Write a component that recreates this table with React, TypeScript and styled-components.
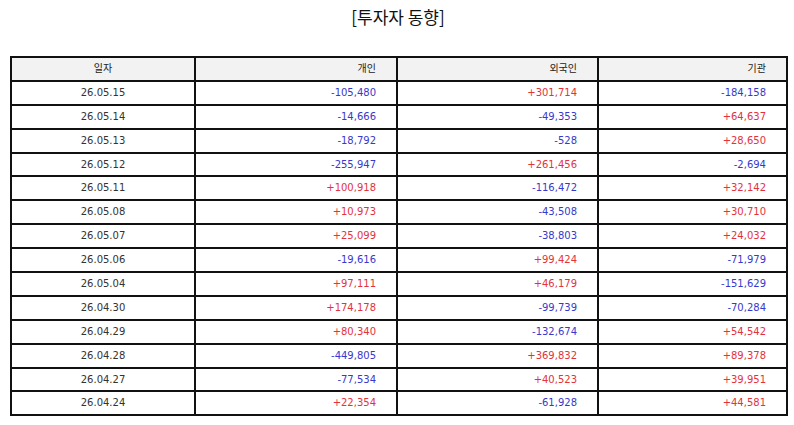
import React from 'react'
import styled, { createGlobalStyle } from 'styled-components'

type Row = {
   date: string,
   retail: number,
   foreign: number,
   inst: number,
}

const rows: Row[] = [
   { date: '26.05.15', retail: -105480, foreign: 301714, inst: -184158 },
   { date: '26.05.14', retail: -14666, foreign: -49353, inst: 64637 },
   { date: '26.05.13', retail: -18792, foreign: -528, inst: 28650 },
   { date: '26.05.12', retail: -255947, foreign: 261456, inst: -2694 },
   { date: '26.05.11', retail: 100918, foreign: -116472, inst: 32142 },
   { date: '26.05.08', retail: 10973, foreign: -43508, inst: 30710 },
   { date: '26.05.07', retail: 25099, foreign: -38803, inst: 24032 },
   { date: '26.05.06', retail: -19616, foreign: 99424, inst: -71979 },
   { date: '26.05.04', retail: 97111, foreign: 46179, inst: -151629 },
   { date: '26.04.30', retail: 174178, foreign: -99739, inst: -70284 },
   { date: '26.04.29', retail: 80340, foreign: -132674, inst: 54542 },
   { date: '26.04.28', retail: -449805, foreign: 369832, inst: 89378 },
   { date: '26.04.27', retail: -77534, foreign: 40523, inst: 39951 },
   { date: '26.04.24', retail: 22354, foreign: -61928, inst: 44581 },
]

const fmt = (n: number) => (n > 0 ? '+' : '-') + Math.abs(n).toLocaleString('en-US')

const GlobalStyle = createGlobalStyle`
   html, body {
      margin: 0;
      padding: 0;
      background: #fff;
   }
   body {
      font-family: "DejaVu Sans", "Noto Sans CJK KR", sans-serif;
   }
`

const Page = styled.div`
   width: 794px;
   height: 425px;
   padding: 0 8px 0 10px;
   box-sizing: border-box;
`

const Title = styled.h1`
   margin: 0;
   height: 56px;
   padding-top: 5px;
   box-sizing: border-box;
   text-align: center;
   font-family: "Noto Sans CJK KR", sans-serif;
   font-size: 17px;
   font-weight: 400;
   line-height: 24px;
   color: #111;
`

const Table = styled.table`
   width: 776px;
   border-collapse: collapse;
   table-layout: fixed;
   font-size: 10px;
`

const Tr = styled.tr`
   height: 23.9px;
`

const Cell = styled.td<{ $align?: 'center' | 'right', $tone?: 'up' | 'down', $head?: boolean }>`
   border: 2px solid #111;
   padding: 0 20px 0 8px;
   text-align: ${p => p.$align || 'right'};
   background: ${p => (p.$head ? '#f2f2f2' : '#fff')};
   color: ${p => (p.$tone === 'up' ? '#e2323c' : p.$tone === 'down' ? '#3838cc' : '#333')};
   font-weight: 400;
   line-height: 14px;
   white-space: nowrap;
   ${p => p.$align === 'center' && 'padding: 0 6px;'}
`

const HeadLabel = styled.span`
   font-family: "Noto Sans CJK KR", sans-serif;
   font-size: 10px;
   color: #222;
`

const tone = (n: number) => (n > 0 ? 'up' : 'down') as 'up' | 'down'

const App: React.FC = () => {
   return (
      <Page>
         <GlobalStyle />
         <Title>[투자자 동향]</Title>
         <Table>
            <colgroup>
               <col style={{ width: 184 }} />
               <col style={{ width: 202 }} />
               <col style={{ width: 201 }} />
               <col style={{ width: 189 }} />
            </colgroup>
            <thead>
               <Tr>
                  <Cell as='th' $head $align='center'><HeadLabel>일자</HeadLabel></Cell>
                  <Cell as='th' $head><HeadLabel>개인</HeadLabel></Cell>
                  <Cell as='th' $head><HeadLabel>외국인</HeadLabel></Cell>
                  <Cell as='th' $head><HeadLabel>기관</HeadLabel></Cell>
               </Tr>
            </thead>
            <tbody>
               {rows.map((row, i) => (
                  <Tr key={i}>
                     <Cell $align='center'>{row.date}</Cell>
                     <Cell $tone={tone(row.retail)}>{fmt(row.retail)}</Cell>
                     <Cell $tone={tone(row.foreign)}>{fmt(row.foreign)}</Cell>
                     <Cell $tone={tone(row.inst)}>{fmt(row.inst)}</Cell>
                  </Tr>
               ))}
            </tbody>
         </Table>
      </Page>
   )
}

export default App
